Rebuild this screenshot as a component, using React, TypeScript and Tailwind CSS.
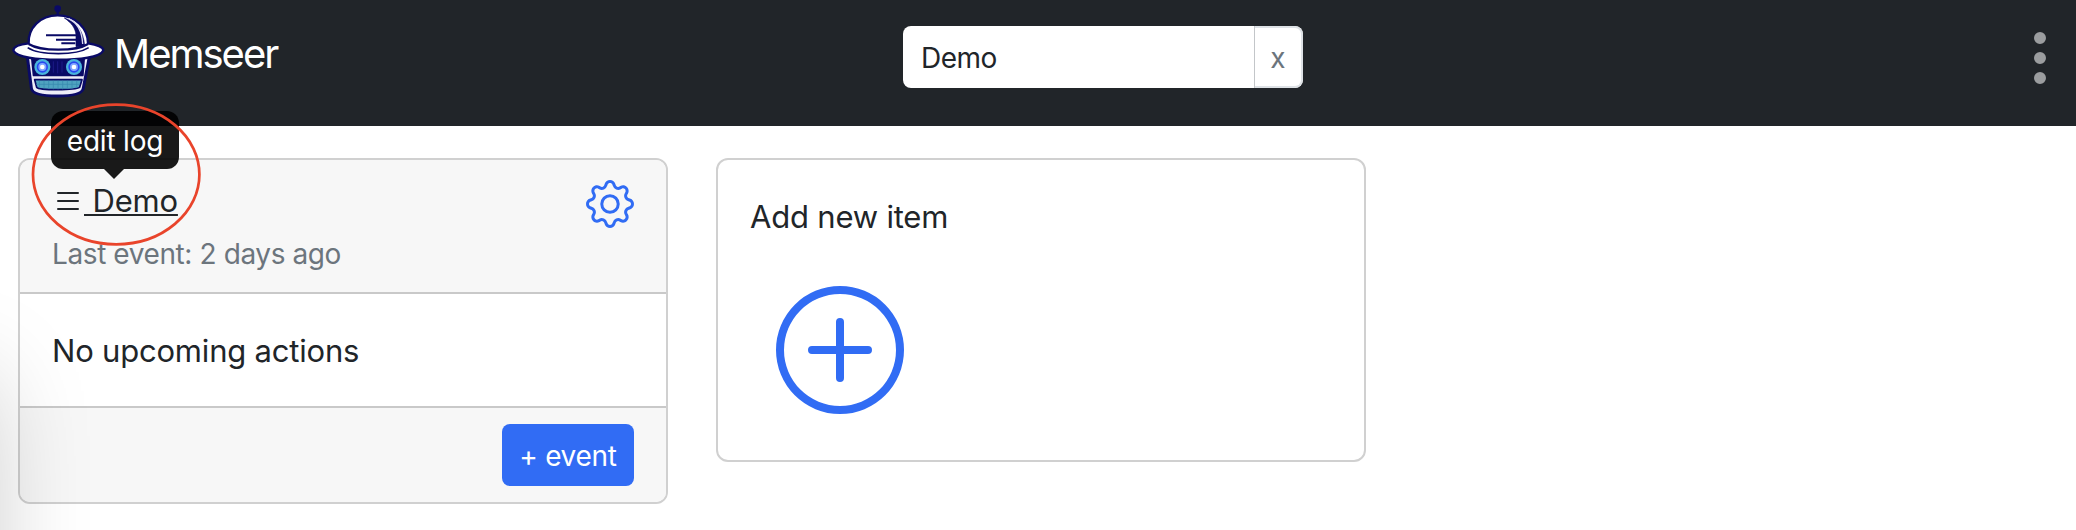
import { BsGear, BsList, BsPlusCircle, BsThreeDotsVertical } from "react-icons/bs";

function Logo() {
  return (
    <svg viewBox="0 0 360 390" className="h-[130px] w-[120px] shrink-0" fill="none">
      <g stroke="#0a0a66" strokeLinejoin="round">
        <circle cx="173" cy="26" r="10" fill="#0a0a66" stroke="none" />
        <path d="M173 30V46" strokeWidth="7" />
        <path d="M82 170L94 264Q96 288 172 288T250 264L268 170Z" fill="#eeedf8" strokeWidth="9" />
        <path d="M96 176H252L248 226H101Z" fill="#0a0a66" strokeWidth="6" />
        <path d="M160 184V218M173 184V220M186 184V218" stroke="#1c1a86" strokeWidth="3" />
        <path d="M104 239H246L239 262Q228 269 172 269T110 262Z" fill="#4fa3c0" strokeWidth="5" />
        <path d="M118 242V264M132 242V266M146 242V267M160 242V268M174 242V268M188 242V268M202 242V267M216 242V266M230 242V264M108 253H240" stroke="#3588ae" strokeWidth="2" />
        <path d="M40 151C40 139 62 133 86 130C84 84 120 46 173 46S264 84 264 130C288 134 310 139 310 151C302 172 236 179 175 179S48 172 40 151Z" fill="#fff" strokeWidth="7" />
        <path d="M193 54C230 66 250 92 254 138L228 140V104C226 84 214 68 193 54Z" fill="#0a0a66" strokeWidth="2" />
        <path d="M206 56C232 68 246 92 248 132" stroke="#d9d8f0" strokeWidth="4" />
        <path d="M138 106H228M168 119H228M184 130H226" strokeWidth="6" />
        <path d="M86 132C108 146 142 149 175 149S242 146 264 132" strokeWidth="7" />
        <path d="M83 143C104 157 142 161 175 161S244 157 266 143" strokeWidth="5" />
      </g>
      {[127, 222].map((x) => (
        <g key={x}>
          <circle cx={x} cy="201" r="24" fill="#49b4dc" />
          <circle cx={x} cy="201" r="17" fill="#2a48f0" />
          <circle cx={x} cy="201" r="12" fill="#7fa6ff" />
          <circle cx={x} cy="201" r="7" fill="#fff" />
        </g>
      ))}
    </svg>
  );
}

function Header() {
  return (
    <header className="grid h-[126px] grid-cols-[903px_400px_1fr] items-start bg-[#212529]">
      <div className="flex h-[126px] items-start overflow-hidden">
        <Logo />
        <span className="-ml-[6px] mt-[30px] text-[40px] leading-[48px] tracking-[-2px] text-white">Memseer</span>
      </div>
      <div className="mt-[26px] flex h-[62px] overflow-hidden rounded-lg bg-white">
        <div className="flex w-[352px] items-center border-r border-[#c3c6c9] pl-[18px] pt-px text-[28px] tracking-[-0.5px]">
          Demo
        </div>
        <button className="flex flex-1 items-center justify-center rounded-r-lg border-2 border-l-0 border-[#dee2e6] pt-px text-[28px] text-[#6c757d]">
          x
        </button>
      </div>
      <BsThreeDotsVertical className="mr-1 mt-[26px] size-16 justify-self-end text-[#9b9d9f]" />
    </header>
  );
}

function LogCard() {
  return (
    <section className="flex h-[346px] w-[650px] flex-col rounded-xl border-2 border-[#d0d0d0] bg-white">
      <div className="flex h-[134px] shrink-0 justify-between rounded-t-[10px] border-b-2 border-[#c9c9c9] bg-[#f7f7f7] pl-8 pr-8 pt-5">
        <div>
          <div className="relative flex h-10 items-center">
            <BsList className="mt-px size-8" />
            <span className="mt-0.5 whitespace-pre text-[31px] leading-10 tracking-[-0.2px] underline decoration-2 underline-offset-2"> Demo</span>
            <div className="absolute -left-px -top-[69px] flex h-[58px] w-32 items-center justify-center rounded-xl bg-black/90 pt-0.5 text-[28px] tracking-[-0.2px] text-white">
              edit log
              <svg viewBox="0 0 20 10" className="absolute left-[53px] top-full h-[10px] w-5">
                <path d="M0 0H20L10 10Z" fill="#191919" />
              </svg>
            </div>
          </div>
          <p className="mt-[14px] text-[28px] leading-10 tracking-[-0.4px] text-[#6c757d]">Last event: 2 days ago</p>
        </div>
        <BsGear className="size-12 text-[#316cf4]" />
      </div>
      <div className="flex h-28 shrink-0 items-center pl-8 pt-0.5 text-[31px] tracking-[-0.2px]">No upcoming actions</div>
      <div className="flex flex-1 items-start justify-end rounded-b-[10px] border-t-2 border-[#c9c9c9] bg-[#f7f7f7] pr-8 pt-4">
        <button className="h-[62px] w-[132px] rounded-lg bg-[#316cf4] pt-0.5 text-[28px] tracking-[-0.3px] text-white">+ event</button>
      </div>
    </section>
  );
}

function AddCard() {
  return (
    <section className="h-[304px] w-[650px] rounded-xl border-2 border-[#d0d0d0] bg-white px-8 pt-[37px]">
      <h2 className="text-[31px] leading-10 tracking-[-0.2px]">Add new item</h2>
      <BsPlusCircle className="ml-[26px] mt-[49px] size-32 text-[#316cf4]" />
    </section>
  );
}

export default function App() {
  return (
    <div className="relative h-[530px] w-[2076px] overflow-hidden bg-white font-['Inter','Liberation_Sans',sans-serif] text-[#212529]">
      <Header />
      <main className="flex items-start gap-12 pl-[18px] pt-8">
        <LogCard />
        <AddCard />
      </main>
      <svg viewBox="0 0 174 148" className="pointer-events-none absolute left-[29px] top-[100px] h-[148px] w-[174px]">
        <ellipse cx="87.2" cy="74.5" rx="83.2" ry="69.8" fill="none" stroke="#e9442b" strokeWidth="2.7" />
      </svg>
      <div className="pointer-events-none absolute -left-[220px] top-[380px] h-[600px] w-[210px] shadow-[0_0_100px_rgba(0,0,0,0.22)]" />
    </div>
  );
}
